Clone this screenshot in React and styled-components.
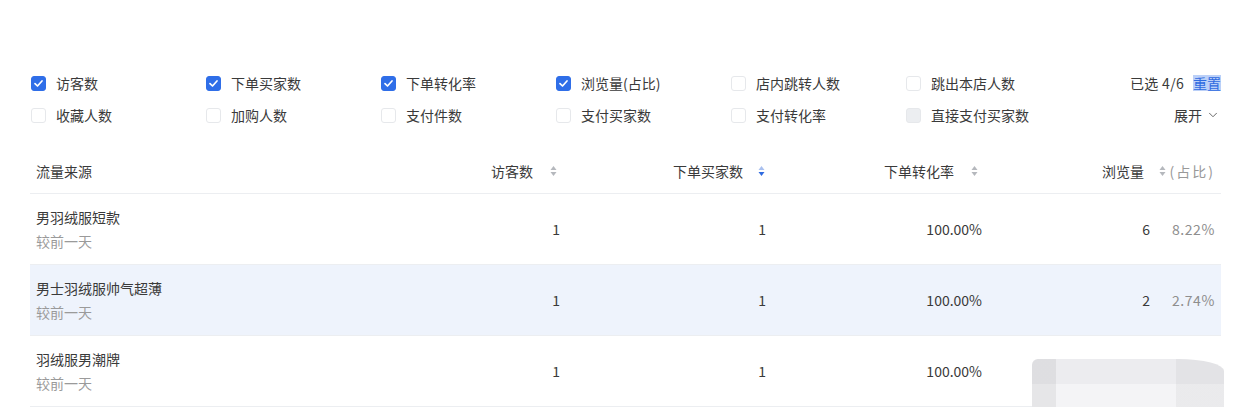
import React from 'react';
import styled, { createGlobalStyle, css } from 'styled-components';
import { ChevronDown } from 'lucide-react';

const GlobalStyle = createGlobalStyle`
  body {
    margin: 0;
    background: #fff;
    color: #3a3a3a;
    font-family: "Noto Sans CJK SC", "Noto Sans", sans-serif;
  }
`;

const Page = styled.div`
  padding: 67px 19px 0 30px;
`;

const FilterBar = styled.div`
  display: flex;
`;

const FilterGrid = styled.div`
  display: grid;
  grid-template-columns: repeat(6, 175px);
  grid-auto-rows: 32px;
  padding-left: 1px;
`;

const FilterItem = styled.label`
  display: flex;
  align-items: center;
  gap: 10px;
  font-size: 14px;
  color: #3a3a3a;
`;

const Box = styled.span`
  box-sizing: border-box;
  width: 15px;
  height: 15px;
  border-radius: 3px;
  border: 1px solid #e6e8eb;
  background: #fff;
  display: flex;
  align-items: center;
  justify-content: center;
  ${({ checked }) => checked && css`
    background: #2f6ee8;
    border-color: #2f6ee8;
  `}
  ${({ disabled }) => disabled && css`
    background: #eceef1;
    border-color: #e6e8eb;
  `}
`;

const FilterSide = styled.div`
  margin-left: auto;
  display: grid;
  grid-auto-rows: 32px;
  justify-items: end;
  align-items: center;
  font-size: 14px;
  color: #3a3a3a;
`;

const Picked = styled.div`
  display: flex;
  align-items: center;
  gap: 9px;
  letter-spacing: 0.3px;
`;

const Reset = styled.span`
  color: #2f6be0;
  background: rgba(60, 120, 235, 0.35);
  line-height: 16px;
  letter-spacing: 0;
`;

const Expand = styled.div`
  display: flex;
  align-items: center;
  gap: 4px;
  padding-right: 1px;
`;

const Table = styled.div`
  margin-top: 17px;
`;

const Row = styled.div`
  position: relative;
  display: grid;
  grid-template-columns: 331px 200px 206px 216px 238px;
  align-items: center;
  height: ${({ head }) => (head ? '45px' : '70px')};
  border-bottom: 1px solid #eceef1;
  background: ${({ hl }) => (hl ? '#eef3fc' : 'transparent')};
  font-size: 14px;
`;

const NameCell = styled.div`
  padding-left: 6px;
  display: flex;
  flex-direction: column;
  gap: 2px;
`;

const Title = styled.div`
  line-height: 22px;
  color: #3a3a3a;
`;

const Sub = styled.div`
  line-height: 22px;
  color: #9a9a9a;
`;

const HeadCell = styled.div`
  display: flex;
  align-items: center;
  justify-content: flex-end;
  padding-right: ${({ pr }) => pr || 4}px;
`;

const NumCell = styled.div`
  display: flex;
  align-items: center;
  justify-content: flex-end;
  padding-right: ${({ pr }) => pr || 1}px;
`;

const SortWrap = styled.span`
  display: inline-flex;
  margin-left: ${({ ml }) => ml}px;
`;

const Pct = styled.span`
  width: 47px;
  margin-left: 18px;
  text-align: right;
  color: #8e8e8e;
  letter-spacing: 0.6px;
`;

const PctHead = styled.span`
  width: 47px;
  margin-left: 2px;
  text-align: right;
  color: #999;
  letter-spacing: 2px;
`;

const Smudge = styled.div`
  position: absolute;
  left: 1002px;
  top: 23px;
  width: 192px;
  height: 48px;
  border-radius: 6px 46px 0 0 / 6px 12px 0 0;
  background:
    linear-gradient(to right, rgba(0, 0, 0, 0.06) 0 24px, transparent 24px 144px, rgba(0, 0, 0, 0.04) 144px),
    linear-gradient(to bottom, #ececef 0 52%, #f4f4f6 52%);
`;

function Check() {
  return (
    <svg width="11" height="11" viewBox="0 0 11 11">
      <path d="M2 5.6 L4.5 8 L9 3" fill="none" stroke="#fff" strokeWidth="1.7" strokeLinecap="round" strokeLinejoin="round" />
    </svg>
  );
}

function SortIcon({ active }) {
  return (
    <svg width="7" height="12" viewBox="0 0 7 12">
      <path d="M0.5 5 L3.5 1 L6.5 5 Z" fill={active ? '#a9c0ef' : '#b5b8bd'} />
      <path d="M0.5 7 L6.5 7 L3.5 11 Z" fill={active ? '#2f6be0' : '#b5b8bd'} />
    </svg>
  );
}

const filters = [
  { label: '访客数', checked: true },
  { label: '下单买家数', checked: true },
  { label: '下单转化率', checked: true },
  { label: '浏览量(占比)', checked: true },
  { label: '店内跳转人数' },
  { label: '跳出本店人数' },
  { label: '收藏人数' },
  { label: '加购人数' },
  { label: '支付件数' },
  { label: '支付买家数' },
  { label: '支付转化率' },
  { label: '直接支付买家数', disabled: true },
];

const rows = [
  { name: '男羽绒服短款', visitors: 1, buyers: 1, rate: '100.00%', views: 6, pct: '8.22%' },
  { name: '男士羽绒服帅气超薄', visitors: 1, buyers: 1, rate: '100.00%', views: 2, pct: '2.74%', hl: true },
  { name: '羽绒服男潮牌', visitors: 1, buyers: 1, rate: '100.00%', views: 1, pct: '1.37%', hidden: true },
];

export default function App() {
  return (
    <Page>
      <GlobalStyle />
      <FilterBar>
        <FilterGrid>
          {filters.map((f) => (
            <FilterItem key={f.label}>
              <Box checked={f.checked} disabled={f.disabled}>{f.checked && <Check />}</Box>
              {f.label}
            </FilterItem>
          ))}
        </FilterGrid>
        <FilterSide>
          <Picked>
            <span>已选 4/6</span>
            <Reset>重置</Reset>
          </Picked>
          <Expand>
            展开 <ChevronDown size={14} strokeWidth={1.5} color="#555" />
          </Expand>
        </FilterSide>
      </FilterBar>

      <Table>
        <Row head>
          <NameCell><Title>流量来源</Title></NameCell>
          <HeadCell>访客数<SortWrap ml={17}><SortIcon /></SortWrap></HeadCell>
          <HeadCell pr={2}>下单买家数<SortWrap ml={15}><SortIcon active /></SortWrap></HeadCell>
          <HeadCell pr={5}>下单转化率<SortWrap ml={17}><SortIcon /></SortWrap></HeadCell>
          <HeadCell pr={6}>
            浏览量<SortWrap ml={15}><SortIcon /></SortWrap>
            <PctHead>(占比)</PctHead>
          </HeadCell>
        </Row>
        {rows.map((r) => (
          <Row key={r.name} hl={r.hl}>
            <NameCell>
              <Title>{r.name}</Title>
              <Sub>较前一天</Sub>
            </NameCell>
            <NumCell>{r.visitors}</NumCell>
            <NumCell>{r.buyers}</NumCell>
            <NumCell>{r.rate}</NumCell>
            <NumCell pr={6}>
              {r.views}
              <Pct>{r.pct}</Pct>
            </NumCell>
            {r.hidden && <Smudge />}
          </Row>
        ))}
      </Table>
    </Page>
  );
}
